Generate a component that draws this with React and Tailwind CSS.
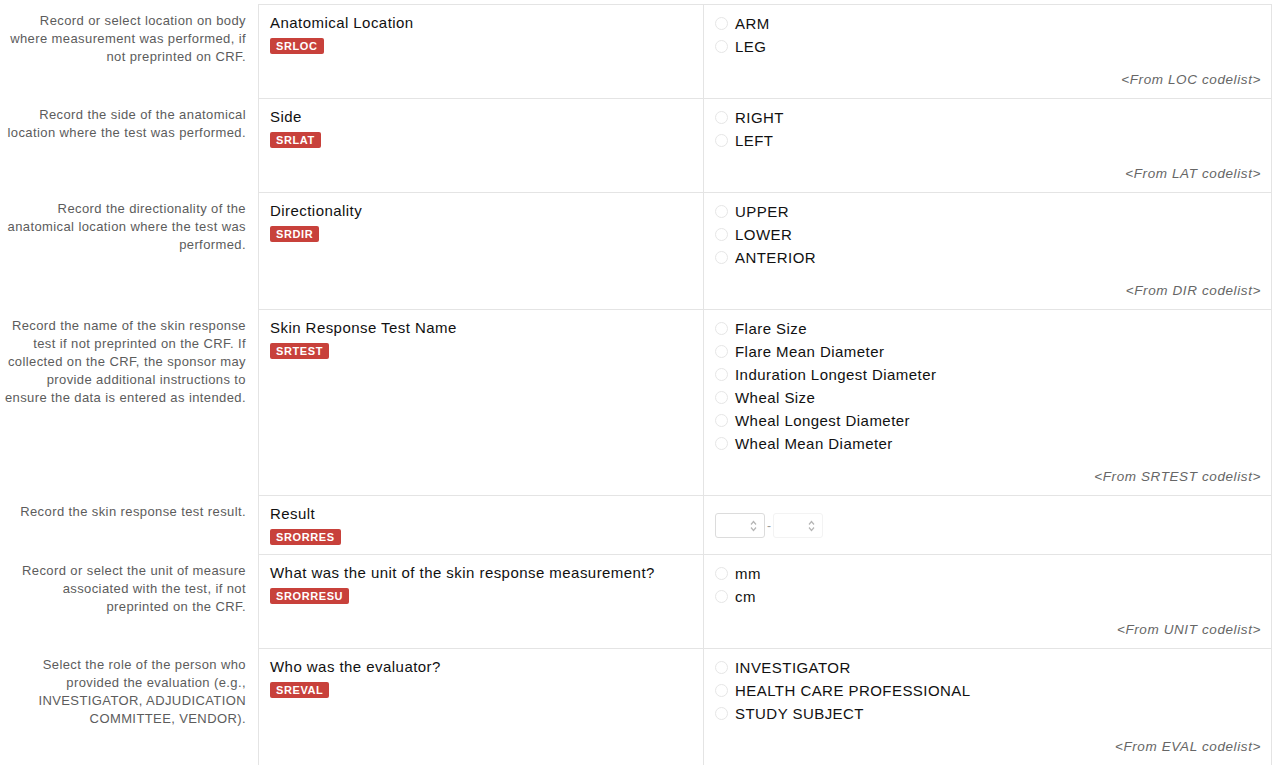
import React from 'react';

const rows = [
  {
    desc: 'Record or select location on body where measurement was performed, if not preprinted on CRF.',
    label: 'Anatomical Location',
    code: 'SRLOC',
    options: ['ARM', 'LEG'],
    codelist: 'LOC',
  },
  {
    desc: 'Record the side of the anatomical location where the test was performed.',
    label: 'Side',
    code: 'SRLAT',
    options: ['RIGHT', 'LEFT'],
    codelist: 'LAT',
  },
  {
    desc: 'Record the directionality of the anatomical location where the test was performed.',
    label: 'Directionality',
    code: 'SRDIR',
    options: ['UPPER', 'LOWER', 'ANTERIOR'],
    codelist: 'DIR',
  },
  {
    desc: 'Record the name of the skin response test if not preprinted on the CRF. If collected on the CRF, the sponsor may provide additional instructions to ensure the data is entered as intended.',
    label: 'Skin Response Test Name',
    code: 'SRTEST',
    options: [
      'Flare Size',
      'Flare Mean Diameter',
      'Induration Longest Diameter',
      'Wheal Size',
      'Wheal Longest Diameter',
      'Wheal Mean Diameter',
    ],
    codelist: 'SRTEST',
  },
  {
    desc: 'Record the skin response test result.',
    label: 'Result',
    code: 'SRORRES',
    range: true,
  },
  {
    desc: 'Record or select the unit of measure associated with the test, if not preprinted on the CRF.',
    label: 'What was the unit of the skin response measurement?',
    code: 'SRORRESU',
    options: ['mm', 'cm'],
    codelist: 'UNIT',
  },
  {
    desc: 'Select the role of the person who provided the evaluation (e.g., INVESTIGATOR, ADJUDICATION COMMITTEE, VENDOR).',
    label: 'Who was the evaluator?',
    code: 'SREVAL',
    options: ['INVESTIGATOR', 'HEALTH CARE PROFESSIONAL', 'STUDY SUBJECT'],
    codelist: 'EVAL',
  },
];

const Radio = ({ text }) => (
  <label className="flex items-center h-[23px]">
    <span className="w-[13px] h-[13px] rounded-full border border-[#e6e6e6] bg-white mr-[7px] shrink-0"></span>
    <span className="text-[15px] leading-[23px] tracking-[0.45px] text-[#111]">{text}</span>
  </label>
);

const NumberBox = ({ faded }) => (
  <div className={`w-[50px] h-[25px] rounded-[3px] border ${faded ? 'border-[#f3f3f3]' : 'border-[#dcdcdc]'} bg-white flex items-center justify-end pr-[7px]`}>
    <svg width="7" height="14" viewBox="0 0 7 14" className="text-[#b5b5b5]">
      <path d="M1 5.5 L3.5 2.5 L6 5.5" fill="none" stroke="currentColor" strokeWidth="1.2" />
      <path d="M1 8.5 L3.5 11.5 L6 8.5" fill="none" stroke="currentColor" strokeWidth="1.2" />
    </svg>
  </div>
);

const Row = ({ row }) => (
  <div className="flex">
    <div className="w-[258px] shrink-0 pt-[8px] pr-[12px] pl-1 text-right text-[13px] leading-[18px] tracking-[0.4px] text-[#5c5c5c]">
      {row.desc}
    </div>
    <div className={`w-[445px] shrink-0 border-l border-t border-[#e4e4e4] bg-white pl-[11px] pr-3 pt-[7px] ${row.range ? 'pb-[9px]' : 'pb-[10px]'}`}>
      <div className="text-[15px] leading-[22px] tracking-[0.45px] text-[#111]">{row.label}</div>
      <div className="mt-[4px] w-fit h-[16px] rounded-[2px] bg-[#c8413b] px-[6px] text-[11px] leading-[16px] font-bold tracking-[0.6px] text-white">
        {row.code}
      </div>
    </div>
    <div className="w-[569px] shrink-0 border-l border-t border-r border-[#e4e4e4] bg-white pl-[11px] pr-[10px] pt-[7px] pb-[10px]">
      {row.range ? (
        <div className="flex items-center pt-[10px]">
          <NumberBox />
          <span className="mx-[2px] text-[#999] text-[12px]">-</span>
          <NumberBox faded />
        </div>
      ) : (
        <>
          <div>
            {row.options.map((o) => (
              <Radio key={o} text={o} />
            ))}
          </div>
          <div className="mt-[13px] text-right text-[13.5px] leading-[17px] tracking-[0.6px] italic text-[#666]">
            &lt;From {row.codelist} codelist&gt;
          </div>
        </>
      )}
    </div>
  </div>
);

export default function App() {
  return (
    <div className="min-h-screen bg-white pt-[4px]" style={{ fontFamily: '"Liberation Sans", Arial, sans-serif' }}>
      {rows.map((r) => (
        <Row key={r.code} row={r} />
      ))}
    </div>
  );
}
